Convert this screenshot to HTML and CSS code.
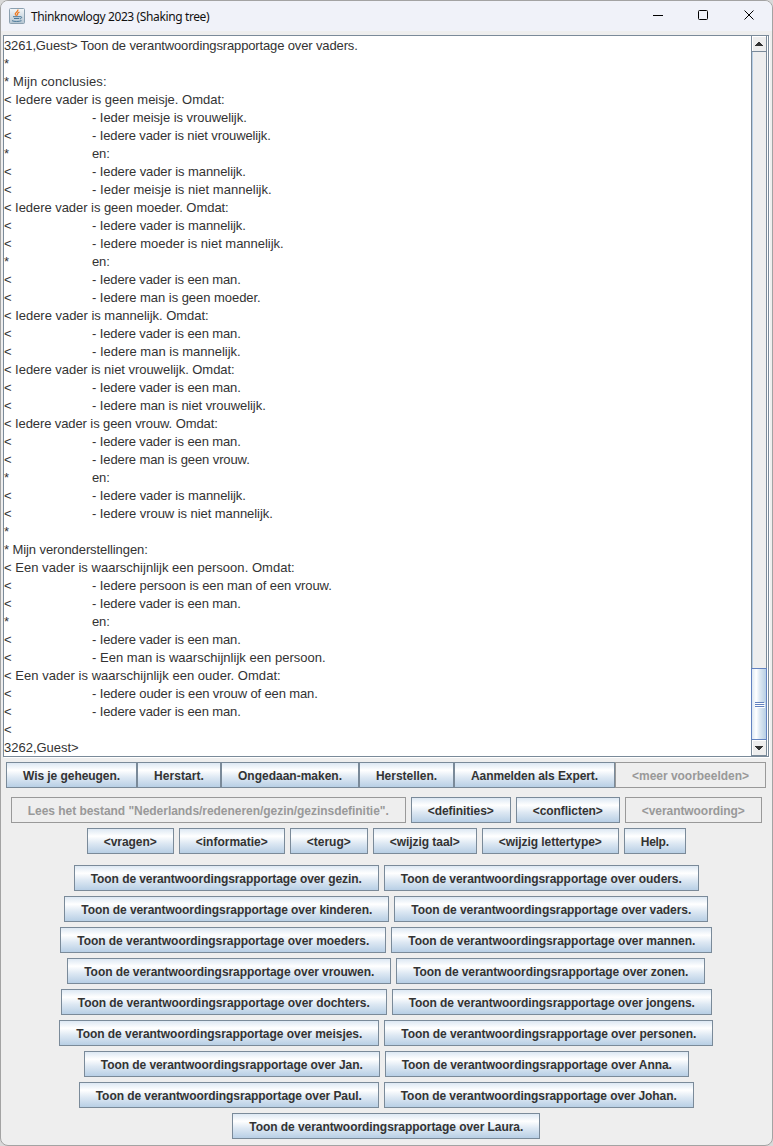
FILE: index.html
```html
<!DOCTYPE html>
<html lang="nl">
<head>
<meta charset="utf-8">
<title>Thinknowlogy 2023 (Shaking tree)</title>
<link rel="stylesheet" href="styles.css">
</head>
<body>
<div class="window">
<header class="titlebar">
<svg class="logo" width="16" height="16" viewBox="0 0 16 16"><defs><linearGradient id="lg" x2="0" y2="1"><stop offset="0" stop-color="#f4f7f9"/><stop offset="1" stop-color="#b4c5d2"/></linearGradient></defs><rect x=".5" y=".5" width="15" height="15" rx="1" fill="url(#lg)" stroke="#8ba0b0"/><path d="M8.800 1.500C9.800 3.800 5.500 4.500 6.300 6.300L7.500 8M10.500 4C8 5 8 6 8.500 7.500" fill="none" stroke="#ee7a22" stroke-width="1.300"/><path d="M4 8.700H11M5 10.500H10.300M11 8.700C13.500 8.200 13 10.500 11 10.800M3 12.700C5 13.700 10 13.700 12.500 12.700" fill="none" stroke="#4a7899"/></svg>
<h1 class="title">Thinknowlogy 2023 (Shaking tree)</h1>
<svg class="controls" width="104" height="12" viewBox="0 0 104 12" fill="none" stroke="#000"><path d="M0 5.500H10"/><rect x="45.500" y=".5" width="9" height="9" rx="1"/><path d="M91.500 .5L100.500 9.500M100.500 .5L91.500 9.500"/></svg>
</header>
<main class="console">
<pre class="output"><span data-end="357">3261,Guest&gt; Toon de verantwoordingsrapportage over vaders.</span>
*
<span data-end="106">* Mijn conclusies:</span>
<span data-end="224">&lt; Iedere vader is geen meisje. Omdat:</span>
&lt;	<span data-end="246">- Ieder meisje is vrouwelijk.</span>
&lt;	<span data-end="270">- Iedere vader is niet vrouwelijk.</span>
*	<span data-end="109">en:</span>
&lt;	<span data-end="245">- Iedere vader is mannelijk.</span>
&lt;	<span data-end="271">- Ieder meisje is niet mannelijk.</span>
<span data-end="228">&lt; Iedere vader is geen moeder. Omdat:</span>
&lt;	<span data-end="245">- Iedere vader is mannelijk.</span>
&lt;	<span data-end="283">- Iedere moeder is niet mannelijk.</span>
*	<span data-end="109">en:</span>
&lt;	<span data-end="240">- Iedere vader is een man.</span>
&lt;	<span data-end="260">- Iedere man is geen moeder.</span>
<span data-end="208">&lt; Iedere vader is mannelijk. Omdat:</span>
&lt;	<span data-end="240">- Iedere vader is een man.</span>
&lt;	<span data-end="240">- Iedere man is mannelijk.</span>
<span data-end="234">&lt; Iedere vader is niet vrouwelijk. Omdat:</span>
&lt;	<span data-end="240">- Iedere vader is een man.</span>
&lt;	<span data-end="265">- Iedere man is niet vrouwelijk.</span>
<span data-end="217">&lt; Iedere vader is geen vrouw. Omdat:</span>
&lt;	<span data-end="240">- Iedere vader is een man.</span>
&lt;	<span data-end="249">- Iedere man is geen vrouw.</span>
*	<span data-end="109">en:</span>
&lt;	<span data-end="245">- Iedere vader is mannelijk.</span>
&lt;	<span data-end="272">- Iedere vrouw is niet mannelijk.</span>
*
<span data-end="147">* Mijn veronderstellingen:</span>
<span data-end="294">&lt; Een vader is waarschijnlijk een persoon. Omdat:</span>
&lt;	<span data-end="331">- Iedere persoon is een man of een vrouw.</span>
&lt;	<span data-end="240">- Iedere vader is een man.</span>
*	<span data-end="109">en:</span>
&lt;	<span data-end="240">- Iedere vader is een man.</span>
&lt;	<span data-end="325">- Een man is waarschijnlijk een persoon.</span>
<span data-end="280">&lt; Een vader is waarschijnlijk een ouder. Omdat:</span>
&lt;	<span data-end="317">- Iedere ouder is een vrouw of een man.</span>
&lt;	<span data-end="240">- Iedere vader is een man.</span>
&lt;
<span data-end="78">3262,Guest&gt;</span></pre>
<div class="scrollbar">
<div class="arrow"><svg width="8" height="4" viewBox="0 0 8 4" shape-rendering="crispEdges"><path d="M3 0H5V1H6V2H7V3H8V4H0V3H1V2H2V1H3Z" fill="#333"/></svg></div>
<div class="track"><div class="thumb"><i></i><i></i><i></i></div></div>
<div class="arrow down"><svg width="8" height="4" viewBox="0 0 8 4" shape-rendering="crispEdges"><path d="M0 0H8V1H7V2H6V3H5V4H3V3H2V2H1V1H0Z" fill="#333"/></svg></div>
</div>
</main>
<nav class="toolbar">
<button class="w131">Wis je geheugen.</button><button class="w84">Herstart.</button><button class="w138">Ongedaan-maken.</button><button class="w95">Herstellen.</button><button class="w161">Aanmelden als Expert.</button><button class="w151" disabled>&lt;meer voorbeelden&gt;</button>
</nav>
<section class="commands">
<div class="row"><button class="w395" disabled>Lees het bestand "Nederlands/redeneren/gezin/gezinsdefinitie".</button><button class="w100">&lt;definities&gt;</button><button class="w104">&lt;conflicten&gt;</button><button class="w137" disabled>&lt;verantwoording&gt;</button></div>
<div class="row"><button class="w87">&lt;vragen&gt;</button><button class="w106">&lt;informatie&gt;</button><button class="w78">&lt;terug&gt;</button><button class="w104">&lt;wijzig taal&gt;</button><button class="w137">&lt;wijzig lettertype&gt;</button><button class="w62">Help.</button></div>
</section>
<section class="reports">
<div class="row"><button class="w305">Toon de verantwoordingsrapportage over gezin.</button><button class="w315">Toon de verantwoordingsrapportage over ouders.</button></div>
<div class="row"><button class="w325">Toon de verantwoordingsrapportage over kinderen.</button><button class="w314">Toon de verantwoordingsrapportage over vaders.</button></div>
<div class="row"><button class="w326">Toon de verantwoordingsrapportage over moeders.</button><button class="w321">Toon de verantwoordingsrapportage over mannen.</button></div>
<div class="row"><button class="w324">Toon de verantwoordingsrapportage over vrouwen.</button><button class="w309">Toon de verantwoordingsrapportage over zonen.</button></div>
<div class="row"><button class="w326">Toon de verantwoordingsrapportage over dochters.</button><button class="w320">Toon de verantwoordingsrapportage over jongens.</button></div>
<div class="row"><button class="w320">Toon de verantwoordingsrapportage over meisjes.</button><button class="w329">Toon de verantwoordingsrapportage over personen.</button></div>
<div class="row"><button class="w296">Toon de verantwoordingsrapportage over Jan.</button><button class="w304">Toon de verantwoordingsrapportage over Anna.</button></div>
<div class="row"><button class="w300">Toon de verantwoordingsrapportage over Paul.</button><button class="w310">Toon de verantwoordingsrapportage over Johan.</button></div>
<div class="row"><button class="w308">Toon de verantwoordingsrapportage over Laura.</button></div>
</section>
</div>
<script src="fit.js"></script>
</body>
</html>
```

FILE: fit.js
```js
// Spread the letter spacing so that each text run fills its measured width.
function fit(element, range, width) {
  const natural = range.getBoundingClientRect().width;
  element.style.letterSpacing = (width - natural) / element.textContent.length + "px";
}

function textRange(element) {
  const range = document.createRange();
  range.selectNodeContents(element);
  return range;
}

document.querySelectorAll("[data-end]").forEach((run) => {
  const left = run.getBoundingClientRect().left;
  fit(run, textRange(run), Number(run.dataset.end) - left + 0.7);
});

// Buttons keep a 16px inset and a 1px border on both sides.
document.querySelectorAll("button").forEach((button) => {
  fit(button, textRange(button), button.offsetWidth - 34);
});
```

FILE: styles.css
```css
* { box-sizing: border-box; }
body { margin: 0; background: #d9d9d9; font-family: "Liberation Sans", Arial, sans-serif; }
.window { height: 1146px; border: 1px solid #a3a3a3; border-radius: 8px; background: #eee; overflow: hidden; }
.titlebar { height: 30px; display: flex; align-items: center; padding: 0 15px 0 8px; background: #f0f2f9; }
.logo { margin-top: -1px; }
.title { flex: 1; margin: 0 0 0 6px; font: 12px "Noto Sans", sans-serif; letter-spacing: -.38px; color: #111; }
.console { display: flex; height: 722px; margin: 4px 3px 0 2px; border: 1px solid #7a8a99; background: #fff; box-shadow: 1px 1px #fff; }
.output { flex: 1; margin: 0; padding-top: 1px; font: 13px/18px "Liberation Sans", Arial, sans-serif; color: #333; tab-size: 88px; }
.scrollbar { width: 16px; display: flex; flex-direction: column; border-left: 1px solid #7a8a99; border-right: 1px solid #7a8a99; margin-right: 1px; background: #eee; }
.arrow { height: 16px; display: flex; align-items: center; justify-content: center; border-bottom: 1px solid #7a8a99; box-shadow: inset 1px 1px #fff; }
.track { flex: 1; display: flex; flex-direction: column; justify-content: flex-end; border-left: 1px solid #b8cfe5; }
.thumb { height: 72px; margin-left: -2px; margin-right: -1px; display: flex; flex-direction: column; align-items: center; justify-content: center; gap: 1px; border: 1px solid #6382bf; background: linear-gradient(90deg, #dce7f2, #fff 30%, #dde8f3 55%, #b8cfe5); }
.thumb i { width: 9px; height: 1px; background: #6382bf; box-shadow: 1px 1px #fff; }
button { height: 26px; flex: none; padding: 2px 0 0; border: 1px solid #7a8a99; border-radius: 0; background: linear-gradient(#dde8f3, #fff 30%, #dde8f3 60%, #b8cfe5); color: #333; font: bold 12px "Liberation Sans", Arial, sans-serif; white-space: nowrap; text-align: center; }
button:disabled { border-color: #999; background: #eee; color: #999; }
.toolbar { display: flex; margin: 5px 0 0 5px; }
.commands, .reports { display: flex; flex-direction: column; gap: 5px; }
.commands { margin-top: 9px; }
.reports { margin-top: 11px; }
.row { display: flex; justify-content: center; gap: 5px; padding-right: .5px; }
.w62 { width: 62px; } .w78 { width: 78px; } .w84 { width: 84px; } .w87 { width: 87px; }
.w95 { width: 95px; } .w100 { width: 100px; } .w104 { width: 104px; } .w106 { width: 106px; }
.w131 { width: 131px; } .w137 { width: 137px; } .w138 { width: 138px; } .w151 { width: 151px; }
.w161 { width: 161px; } .w296 { width: 296px; } .w300 { width: 300px; } .w304 { width: 304px; }
.w305 { width: 305px; } .w308 { width: 308px; } .w309 { width: 309px; } .w310 { width: 310px; }
.w314 { width: 314px; } .w315 { width: 315px; } .w320 { width: 320px; } .w321 { width: 321px; }
.w324 { width: 324px; } .w325 { width: 325px; } .w326 { width: 326px; } .w329 { width: 329px; }
.w395 { width: 395px; }
```
